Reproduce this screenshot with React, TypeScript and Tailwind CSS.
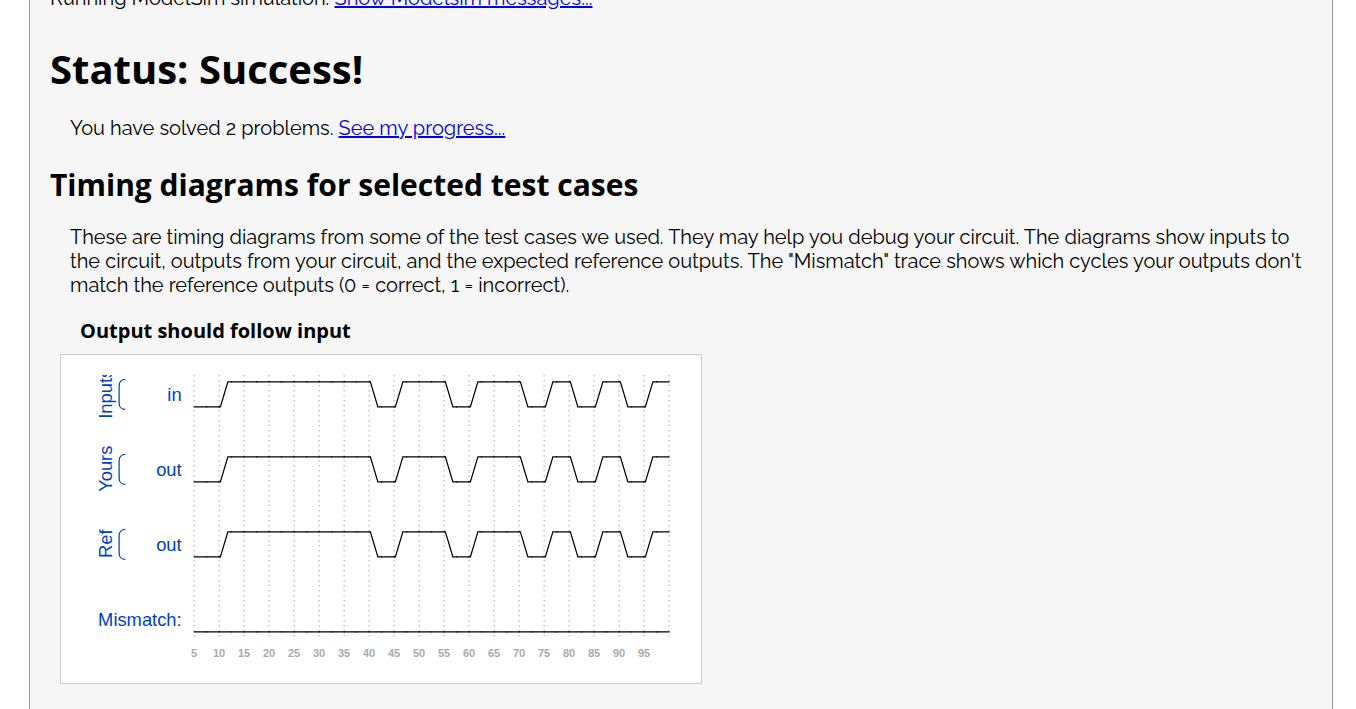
const ORIGIN_X = 90.5;
const BRICK = 10;
const SIGNAL = '00111111111111001111001111001100110011';

function bricks(signal: string, top: number): string[] {
  return signal.split('').map((level, i) => {
    const x = ORIGIN_X + i * BRICK;
    const y = level === '1' ? top : top + 20;
    const prev = i === 0 ? level : signal[i - 1];
    if (prev === level) return `M${x},${y} h${BRICK}`;
    const from = prev === '1' ? top : top + 20;
    return `M${x},${from} h1 L${x + 7},${y} h3`;
  });
}

function Lane({ top, label, signal }: { top: number; label: string; signal: string }) {
  return (
    <g>
      <text x="80.5" y={top + 15} textAnchor="end" fill="#0041c4" fontSize="14.667">
        {label}
      </text>
      {bricks(signal, top).map((d, i) => (
        <path key={i} d={d} fill="none" stroke="#000" strokeWidth="1" strokeLinecap="round" />
      ))}
    </g>
  );
}

function Group({ top, label }: { top: number; label: string }) {
  return (
    <g>
      <path d={`M35.5,${top - 2} c-3,0 -5,2 -5,5 v14 c0,3 2,5 5,5`} fill="none" stroke="#0041c4" strokeWidth="1" />
      <text transform={`translate(24.8 ${top + 9.5}) rotate(270)`} textAnchor="middle" fill="#0041c4" fontSize="14.667">
        {label}
      </text>
    </g>
  );
}

function TimingDiagram() {
  const marks = Array.from({ length: 20 }, (_, i) => i);
  return (
    <svg width="600" height="288" viewBox="0 0 480 230.4" className="block overflow-hidden font-['Liberation_Sans',sans-serif]">
      {marks.map((i) => (
        <path key={i} d={`M${ORIGIN_X + i * 20},0 V210`} stroke="#888" strokeWidth="0.6" strokeDasharray="1.2,2.8" fill="none" />
      ))}
      {marks.slice(0, 19).map((i) => (
        <text key={i} x={ORIGIN_X + i * 20} y="225.5" textAnchor="middle" fill="#aaa" fontSize="8.8" fontWeight="bold">
          {(i + 1) * 5}
        </text>
      ))}
      <Lane top={5.5} label="in" signal={SIGNAL} />
      <Lane top={65.5} label="out" signal={SIGNAL} />
      <Lane top={125.5} label="out" signal={SIGNAL} />
      <Lane top={185.5} label="Mismatch:" signal={SIGNAL.replace(/1/g, '0')} />
      <Group top={5.5} label="Inputs" />
      <Group top={65.5} label="Yours" />
      <Group top={125.5} label="Ref" />
    </svg>
  );
}

export default function App() {
  return (
    <div className="h-[709px] overflow-hidden bg-white pl-[29px] pr-[23px] text-black">
      <main className="flex h-full flex-col border-x border-[#999] bg-[#f6f6f6] px-5 font-[Raleway,Lato,sans-serif] text-[20px] oldstyle-nums leading-6">
        <p className="-mt-[14px] h-6 whitespace-nowrap">
          Running ModelSim simulation. <a href="#" className="text-[#0000ee] underline">Show Modelsim messages...</a>
        </p>
        <h1 className="mt-[32px] font-['Open_Sans',sans-serif] text-[40px] font-bold leading-[54px]">Status: Success!</h1>
        <p className="ml-5 mt-[20px] whitespace-nowrap">
          You have solved 2 problems. <a href="#" className="text-[#0000ee] underline">See my progress...</a>
        </p>
        <h2 className="mt-[27px] font-['Open_Sans',sans-serif] text-[30px] font-bold leading-[36px]">
          Timing diagrams for selected test cases
        </h2>
        <p className="ml-5 mt-[22px]">
          These are timing diagrams from some of the test cases we used. They may help you debug your circuit. The diagrams
          show inputs to the circuit, outputs from your circuit, and the expected reference outputs. The "Mismatch" trace
          shows which cycles your outputs don't match the reference outputs (0 = correct, 1 = incorrect).
        </p>
        <h3 className="ml-[30px] mt-[20px] font-['Open_Sans',sans-serif] text-[20px] font-bold leading-[27px]">
          Output should follow input
        </h3>
        <section className="ml-[10px] mt-[10px] h-[330px] w-[642px] shrink-0 border border-[#ccc] bg-white p-5 lining-nums">
          <TimingDiagram />
        </section>
      </main>
    </div>
  );
}
